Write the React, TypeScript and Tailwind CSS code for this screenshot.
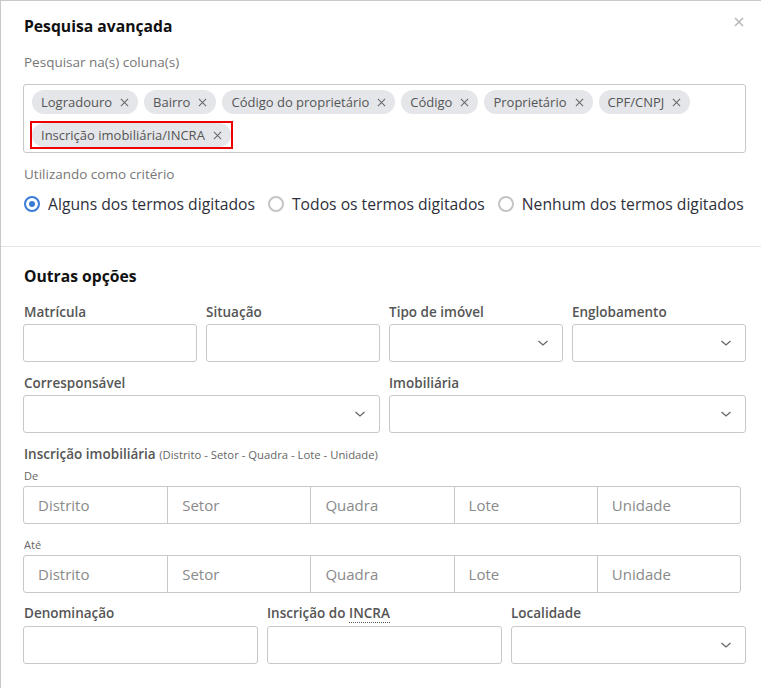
import React from "react";

const font = { fontFamily: '"Open Sans", "Noto Sans", sans-serif' };

function Chevron() {
  return (
    <svg width="12" height="8" viewBox="0 0 12 8" fill="none" className="shrink-0">
      <path d="M1.5 2 L6 6 L10.5 2" stroke="#666" strokeWidth="1.3" />
    </svg>
  );
}

function XIcon({ size = 9, color = "#666", w = 1.3 }: { size?: number; color?: string; w?: number }) {
  return (
    <svg width={size} height={size} viewBox="0 0 10 10" fill="none" className="shrink-0">
      <path d="M1 1 L9 9 M9 1 L1 9" stroke={color} strokeWidth={w} />
    </svg>
  );
}

function Tag({ label, highlight }: { label: string; highlight?: boolean }) {
  return (
    <span className="relative inline-flex">
      <span className="inline-flex h-6 items-center gap-[8px] whitespace-nowrap rounded-full bg-[#e4e6ea] pl-[9px] pr-[9px] text-[13px] leading-none text-[#555]">
        <span>{label}</span>
        <XIcon size={9} color="#6a6a6a" w={1.2} />
      </span>
      {highlight && (
        <span className="pointer-events-none absolute -inset-[2px] border-2 border-[#ee0000]" />
      )}
    </span>
  );
}

function Radio({ label, checked }: { label: string; checked?: boolean }) {
  return (
    <span className="inline-flex items-center gap-2 whitespace-nowrap">
      {checked ? (
        <span className="flex h-4 w-4 items-center justify-center rounded-full border-2 border-[#3a7bd5]">
          <span className="h-[6px] w-[6px] rounded-full bg-[#3a7bd5]" />
        </span>
      ) : (
        <span className="h-4 w-4 rounded-full border-2 border-[#c4c4c4]" />
      )}
      <span className="text-[15.7px] leading-6 text-[#2d2f3a]">{label}</span>
    </span>
  );
}

function Label({ children }: { children: React.ReactNode }) {
  return <div className="text-[13.5px] font-semibold leading-5 text-[#555]">{children}</div>;
}

function Input() {
  return <div className="h-[38px] rounded-[3px] border border-[#c8c8c8] bg-white" />;
}

function Select() {
  return (
    <div className="flex h-[38px] items-center justify-end rounded-[3px] border border-[#c8c8c8] bg-white pr-[13px]">
      <Chevron />
    </div>
  );
}

function Segmented() {
  const parts = ["Distrito", "Setor", "Quadra", "Lote", "Unidade"];
  return (
    <div className="mr-[5px] grid h-[38px] grid-cols-5 rounded-[3px] border border-[#c8c8c8]">
      {parts.map((p, i) => (
        <div
          key={p}
          className={`flex items-center pl-[14px] text-[15px] text-[#8a8a8a] ${i > 0 ? "border-l border-[#c8c8c8]" : ""}`}
        >
          {p}
        </div>
      ))}
    </div>
  );
}

export default function App() {
  return (
    <div
      style={font}
      className="h-[688px] w-[761px] overflow-hidden border-l border-t border-[#c9c9c9] bg-white"
    >
      <div className="pl-[22px] pr-[15px] pt-[13px]">
        <div className="flex items-center justify-between">
          <div className="pl-px text-[15.7px] font-bold leading-6 text-[#111]">Pesquisa avançada</div>
          <div className="-mt-2 mr-[2px]">
            <XIcon size={10} color="#b8b8b8" w={1.6} />
          </div>
        </div>
        <div className="mt-[14px] pl-px text-[13.5px] leading-5 text-[#777]">Pesquisar na(s) coluna(s)</div>
        <div className="mt-3 flex h-[69px] flex-wrap content-start gap-x-[6px] gap-y-[9px] rounded-[3px] border border-[#c8c8c8] px-2 pt-[5px]">
          <Tag label="Logradouro" />
          <Tag label="Bairro" />
          <Tag label="Código do proprietário" />
          <Tag label="Código" />
          <Tag label="Proprietário" />
          <Tag label="CPF/CNPJ" />
          <Tag label="Inscrição imobiliária/INCRA" highlight />
        </div>
        <div className="mt-[11px] pl-px text-[13.5px] leading-5 text-[#777]">Utilizando como critério</div>
        <div className="mt-2 flex items-center gap-[13px] pl-px">
          <Radio label="Alguns dos termos digitados" checked />
          <Radio label="Todos os termos digitados" />
          <Radio label="Nenhum dos termos digitados" />
        </div>
      </div>
      <div className="mt-[30px] h-px bg-[#e3e3e3]" />
      <div className="pl-[22px] pr-[15px] pt-[17px]">
        <div className="pl-px text-[15.7px] font-bold leading-6 text-[#111]">Outras opções</div>
        <div className="mt-[14px] grid grid-cols-4 gap-x-[9px]">
          <div>
            <div className="pl-px"><Label>Matrícula</Label></div>
            <div className="mt-[2px]"><Input /></div>
          </div>
          <div>
            <Label>Situação</Label>
            <div className="mt-[2px]"><Input /></div>
          </div>
          <div>
            <Label>Tipo de imóvel</Label>
            <div className="mt-[2px]"><Select /></div>
          </div>
          <div>
            <Label>Englobamento</Label>
            <div className="mt-[2px]"><Select /></div>
          </div>
        </div>
        <div className="mt-[11px] grid grid-cols-2 gap-x-[9px]">
          <div>
            <div className="pl-px"><Label>Corresponsável</Label></div>
            <div className="mt-[2px]"><Select /></div>
          </div>
          <div>
            <Label>Imobiliária</Label>
            <div className="mt-[2px]"><Select /></div>
          </div>
        </div>
        <div className="mt-[11px] pl-px text-[13.5px] font-semibold leading-5 text-[#555]">
          Inscrição imobiliária{" "}
          <span className="text-[11.3px] font-normal text-[#666]">(Distrito - Setor - Quadra - Lote - Unidade)</span>
        </div>
        <div className="mt-[3px] pl-px text-[11px] leading-4 text-[#666]">De</div>
        <div className="mt-[2px]"><Segmented /></div>
        <div className="mt-[13px] pl-px text-[11px] leading-4 text-[#666]">Até</div>
        <div className="mt-[2px]"><Segmented /></div>
        <div className="mt-[10px] grid grid-cols-3 gap-x-[9px]">
          <div>
            <div className="pl-px"><Label>Denominação</Label></div>
            <div className="mt-[3px]"><Input /></div>
          </div>
          <div>
            <Label>
              Inscrição do{" "}
              <span className="border-b border-dotted border-[#555]">INCRA</span>
            </Label>
            <div className="mt-[3px]"><Input /></div>
          </div>
          <div>
            <Label>Localidade</Label>
            <div className="mt-[3px]"><Select /></div>
          </div>
        </div>
      </div>
    </div>
  );
}
